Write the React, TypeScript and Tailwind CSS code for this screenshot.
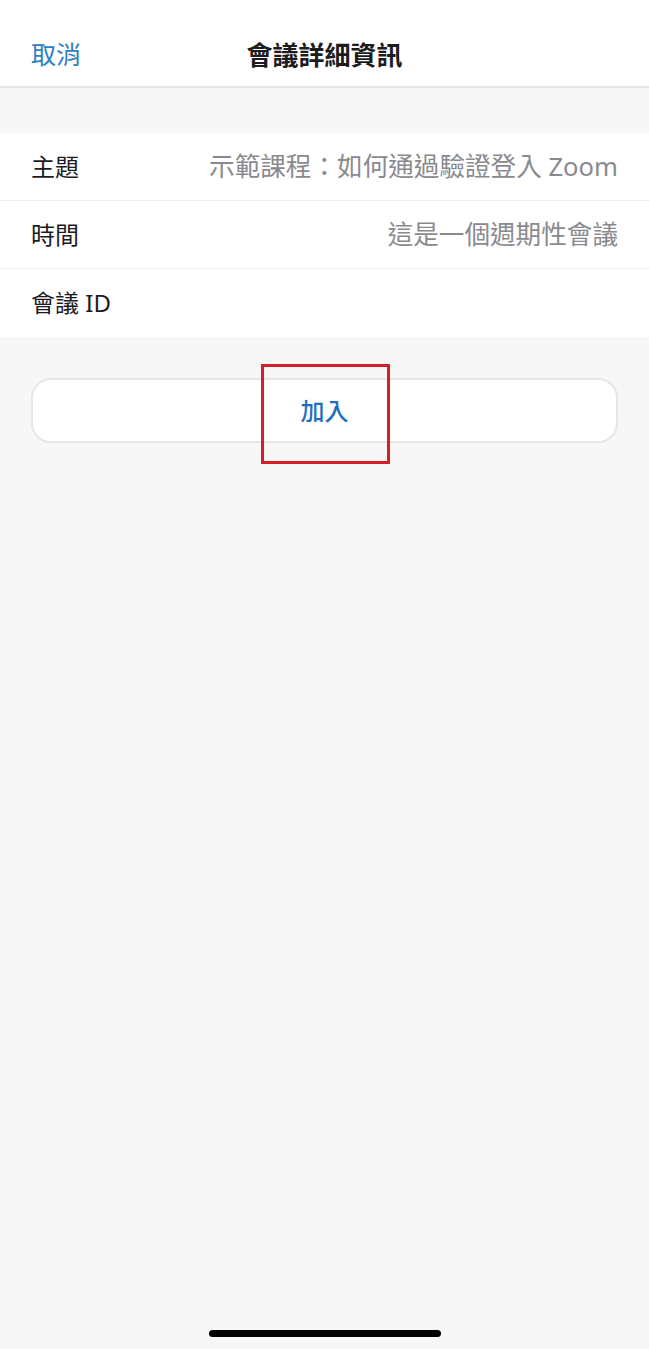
import React from "react";

const font = { fontFamily: '"Noto Sans", "Noto Sans CJK TC", sans-serif' };

function Row({ label, value, last }: { label: string; value?: string; last?: boolean }) {
  return (
    <div className={`flex h-[68px] items-center justify-between bg-white px-[31px] ${last ? "" : "border-b border-[#ededed]"}`}>
      <span className="text-[24px] text-[#1c1c1e] leading-none">{label}</span>
      {value && <span className="text-[25.6px] text-[#8a8a8e] leading-none">{value}</span>}
    </div>
  );
}

export default function App() {
  return (
    <div className="relative flex h-[1349px] w-[649px] flex-col bg-[#f7f7f7]" style={font}>
      <header className="relative flex h-[88px] items-center border-b-2 border-[#e4e4e4] bg-white pt-[22px]">
        <span className="pl-[31px] text-[25px] text-[#2f7fc0] leading-none">取消</span>
        <span className="absolute left-0 right-0 top-[42px] text-center text-[26px] font-bold text-[#1c1c1e] leading-none">會議詳細資訊</span>
      </header>
      <div className="h-[45px]" />
      <div className="flex flex-col">
        <Row label="主題" value="示範課程：如何通過驗證登入 Zoom" />
        <Row label="時間" value="這是一個週期性會議" />
        <Row label="會議 ID" last />
      </div>
      <div className="px-[31px] pt-[41px]">
        <div className="relative flex h-[65px] items-center justify-center rounded-[20px] border-2 border-[#e6e6e6] bg-white">
          <span className="text-[24px] font-medium text-[#1f6fbf] leading-none">加入</span>
          <div className="pointer-events-none absolute left-[228px] top-[-16px] h-[100px] w-[129px] border-[3px] border-[#d42029]" />
        </div>
      </div>
      <div className="flex-1" />
      <div className="flex justify-center pb-[12px]">
        <div className="h-[7px] w-[232px] rounded-full bg-black" />
      </div>
    </div>
  );
}
